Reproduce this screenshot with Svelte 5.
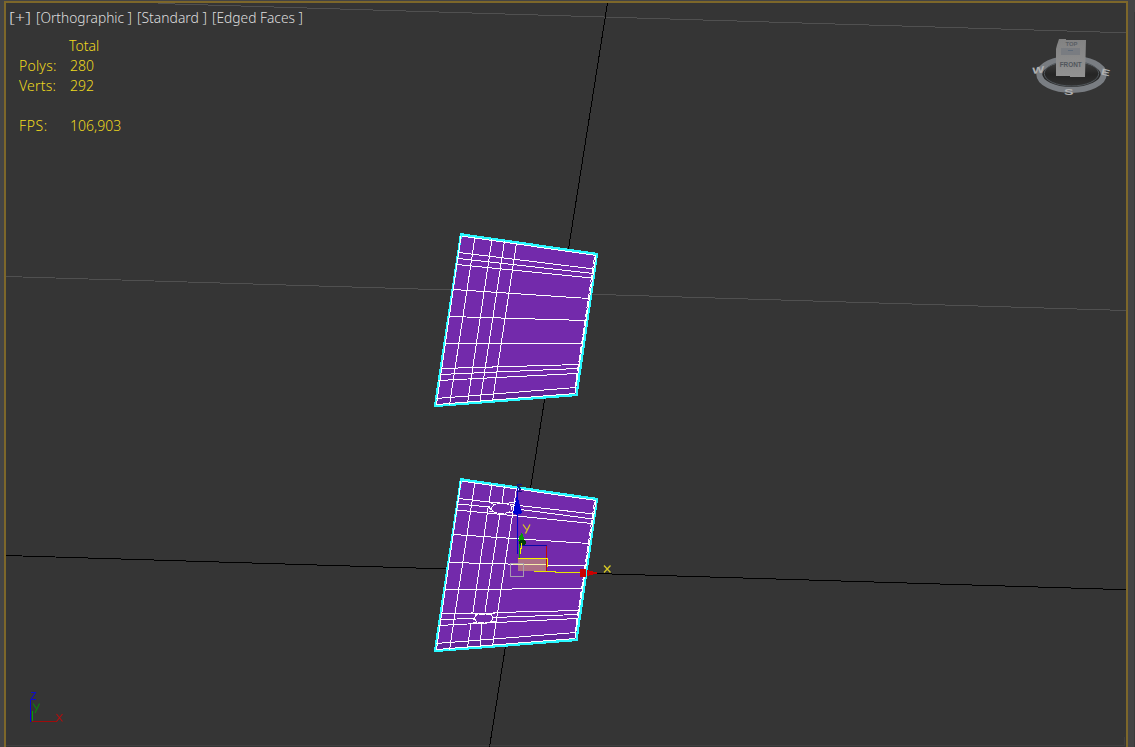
<script>
  const labels = [
    { text: '[+]', width: 22 },
    { text: '[Orthographic ]', width: 96 },
    { text: '[Standard ]', width: 70 },
    { text: '[Edged Faces ]', width: 91 }
  ];
  const columns = [
    [475, 237, 449.5, 405], [492, 239, 467.5, 403],
    [504.5, 241, 480, 402], [516.5, 243, 492.5, 401]
  ];
  const rows = [
    [459, 252.5, 594, 269], [458, 258.5, 593, 273.5], [457, 264.5, 592, 278],
    [453, 289.5, 589, 298.5], [449, 316.5, 586, 320.5], [445, 343.5, 582, 343],
    [441, 368.5, 579, 364.5], [440, 374.5, 578, 368.5], [438, 380.5, 577, 373.5],
    [436, 398.5, 576, 387.5]
  ];
  const shift = (lines) => lines.map(([a, b, c, d]) => [a, b + 245, c, d + 245]);
  const panels = [
    { dy: 0, lines: [...columns, ...rows] },
    {
      dy: 245,
      lines: [
        [475, 482, 449.5, 650], [492, 484, 489, 502], [488, 508, 473, 612], [471, 623, 467.5, 648],
        [504.5, 486, 502, 503], [500, 514, 485, 612], [482, 623, 480, 647],
        [516.5, 488, 492.5, 646],
        [459, 498.5, 493, 502.5], [510, 504.5, 594, 514],
        [458, 504, 490, 507], [513, 508.5, 593, 519],
        [457, 510, 592, 523.5],
        ...shift(rows.slice(3, 4)),
        [449, 562.5, 586, 566], [445, 589.5, 582, 588.5],
        [441, 613.5, 495, 613.5], [495, 612.5, 579, 610.5],
        [440, 619.5, 474, 618.5], [493, 617.5, 578, 614.5],
        [438, 625.5, 577, 618.5],
        [436, 643.5, 576, 632.5]
      ]
    }
  ];
</script>

<main>
  <svg class="scene" width="1135" height="747" viewBox="0 0 1135 747" shape-rendering="crispEdges">
    <rect class="edge" width="1135" height="747" />
    <rect class="ground" x="5" y="2" width="1122" height="750" />
    <path class="grid" d="M158 3.5 1126 32.8M6 276.5 1126 310.5" />
    <path class="axis" d="M607.5 3 489.5 747M6 555.5 1126 589.7" />
    <path class="grid" d="M6 745.5H1124V737" opacity=".35" />
    <rect class="frame" x="5" y="2" width="1122" height="750" />
    <path d="M1134 12V747" stroke="#3a3a3a" />

    {#each panels as panel}
      <g transform={`translate(0 ${panel.dy})`}>
        <path class="face" d="M461 234 597 254 576 395 435 406Z" />
        <path class="shade" d="M436 399 576 388 575 394 435 405Z" />
        <path class="rim" d="M461 234.3 597 254 576.5 395 435 406Z" />
        <path class="wire" d="M461.5 236 596 255.5M461 236 436.5 404.5 575 393.5M596 255.5 575 393" />
        <path class="wire" d="M594.5 257 574.5 391" stroke-dasharray="7 2" />
      </g>
      {#each panel.lines as [x1, y1, x2, y2]}
        <line class="wire" {x1} {y1} {x2} {y2} />
      {/each}
    {/each}

    <path class="wire" stroke-dasharray="6 1" d="M491 508 494 505 498 503.5H506L511 506 512 509 509 512 505 513.5H498L493 511.5Z" />
    <path class="wire" d="M488 501 494 504.5M493 502.5 506 503.5M506 503.5 517 501.5M511 506 515 507M488 507 492 510M508 513 517 511M489 512 493 511" />
    <path class="wire" stroke-dasharray="6 1" d="M474 618 477 614.5H491L493 617.5 491 622.5H477Z" />
    <path class="wire" d="M471 612 477 615M470 624 477 622M490 614 497 612M490 622 496 621M471 618 475 620" />

    <!-- transform gizmo -->
    <rect x="518" y="559" width="29" height="12" fill="#d3a26e" opacity=".6" />
    <path d="M519 545.5H547" stroke="#0909a8" />
    <path d="M546.5 546V572" stroke="#c00909" />
    <path d="M518 558.5H547V567" fill="none" stroke="#f4f400" />
    <path d="M513 564.5H546" stroke="#f7efab" />
    <path d="M534 571.5H555V572.5H580" fill="none" stroke="#e7e700" />
    <path d="M517.5 488V554" stroke="#0000cf" />
    <path d="M517 495 513 513 517 515 522 513Z" fill="#0000cf" />
    <path d="M517 484.5H522M517 485.5 521 489.5M517 491.5H522M519 488V491" stroke="#111383" fill="none" />
    <path d="M519.5 536V558" stroke="#079b07" />
    <path d="M522 532 518 541 525 542Z" fill="#079b07" />
    <ellipse cx="522.5" cy="542.5" rx="3.4" ry="3" fill="#073f0b" />
    <path d="M521.5 543V548L520.5 549V554" stroke="#f4f400" fill="none" />
    <rect x="580" y="569" width="6" height="8" fill="#cb0000" />
    <path d="M587 570 591 571 599 573 591 575 587 576Z" fill="#cb0000" />
    <path d="M523 524.5 526.5 529.5M530 524.5 525.5 533.5M604 565.5 610.5 572.5M610.5 565.5 604 572.5" stroke="#d6c925" stroke-width="1.3" shape-rendering="auto" />
    <rect x="510.5" y="563.5" width="13" height="13" fill="none" stroke="#a99bb0" />

    <!-- world axes -->
    <path d="M32 721.5H57" stroke="#9e0b0b" />
    <path d="M32.5 711V721" stroke="#079b07" />
    <path d="M30.5 700V722" stroke="#0505d5" />
    <g fill="none" shape-rendering="auto" stroke-width="1.1">
      <path d="M31 692.5H35.5L31 699.5H36" stroke="#0d0dcb" />
      <path d="M33 703.5 36.3 708.5M39.5 703.5 35 713" stroke="#0c850c" />
      <path d="M56.5 714 62.5 721.5M62.5 714 56.5 721.5" stroke="#b70d0d" />
    </g>

    <!-- view cube -->
    <g shape-rendering="auto">
      <defs>
        <linearGradient id="disc" x2="0" y2="1">
          <stop stop-color="#454545" />
          <stop offset=".5" stop-color="#252525" />
          <stop offset="1" stop-color="#343434" />
        </linearGradient>
        <linearGradient id="cube" x2="0" y2="1">
          <stop stop-color="#828282" />
          <stop offset="1" stop-color="#929292" />
        </linearGradient>
      </defs>
      <ellipse cx="1071.5" cy="74.3" rx="32.2" ry="15.6" fill="url(#disc)" stroke="#797d82" stroke-width="6" />
      <ellipse cx="1071.5" cy="73.5" rx="27.2" ry="12.5" fill="none" stroke="#50565b" />
      <path d="M1059 39H1066V40L1086 40 1085 77H1070V76H1056V49L1057 45Z" fill="url(#cube)" />
      <path d="M1061 48H1080V55H1061Z" fill="#797c81" />
      <path d="M1068 50.5H1073" stroke="#5f6b79" />
      <text class="cube-top" x="1065.5" y="46.3" textLength="12" lengthAdjust="spacingAndGlyphs">TOP</text>
      <text class="cube-front" x="1059.7" y="67" textLength="22" lengthAdjust="spacingAndGlyphs">FRONT</text>
      <g class="compass">
        <text x="1032" y="73.2" textLength="12" lengthAdjust="spacingAndGlyphs" transform="rotate(-8 1038 70) skewX(-8) translate(10 0)">W</text>
        <text x="1064" y="95.4" textLength="9.5" lengthAdjust="spacingAndGlyphs">S</text>
        <text x="1101" y="75.5" textLength="9" lengthAdjust="spacingAndGlyphs" transform="rotate(14 1106 73)">E</text>
      </g>
    </g>
  </svg>

  <section class="overlay">
    <nav>
      {#each labels as label}
        <svg width={label.width} height="20">
          <text y="14" textLength={label.width} lengthAdjust="spacingAndGlyphs">{label.text}</text>
        </svg>
      {/each}
    </nav>
    <div class="stats">
      <span></span><span class="total">Total</span>
      <span class="polys">Polys:</span><span>280</span>
      <span class="verts">Verts:</span><span>292</span>
      <span class="fps">FPS:</span><span>106,903</span>
    </div>
  </section>
</main>

<style>
  :global(body) { margin: 0; background: #444; overflow: hidden; }
  main { display: grid; width: 1135px; height: 747px; overflow: hidden; }
  main > * { grid-area: 1 / 1; }
  .scene { display: block; }
  .edge { fill: #444; }
  .ground { fill: #353535; }
  .frame { fill: none; stroke: #7d672a; stroke-width: 2; }
  .grid { fill: none; stroke: #505050; }
  .axis { fill: none; stroke: #000; }
  .face { fill: #732aab; }
  .shade { fill: #64259a; }
  .rim { fill: none; stroke: #28f8ff; stroke-width: 2.3; }
  .wire { fill: none; stroke: #fff; stroke-width: 1; }
  .cube-top, .cube-front, .compass { font-family: "Liberation Sans", sans-serif; font-weight: bold; }
  .cube-top { font-size: 5px; fill: #5a5f65; }
  .cube-front { font-size: 8px; fill: #51565c; }
  .compass { font-size: 9px; fill: #b0b0b0; }
  .overlay { z-index: 1; padding: 9px 0 0 9px; font: 300 14px/20px "Noto Sans", sans-serif; }
  nav { display: flex; gap: 5px; height: 27px; }
  nav svg { display: block; overflow: visible; fill: #dedede; }
  .stats { display: grid; grid-template-columns: 51px 70px; grid-template-rows: 20px 20px 20px 20px; padding-left: 10px; color: #efd91e; justify-items: start; }
  .stats span { white-space: nowrap; }
  .stats .fps, .stats .fps + span { grid-row: 5; }
  .total { margin-left: -1px; }
  .fps { letter-spacing: .6px; }
  .stats .polys, .stats .verts { letter-spacing: .2px; }
</style>
